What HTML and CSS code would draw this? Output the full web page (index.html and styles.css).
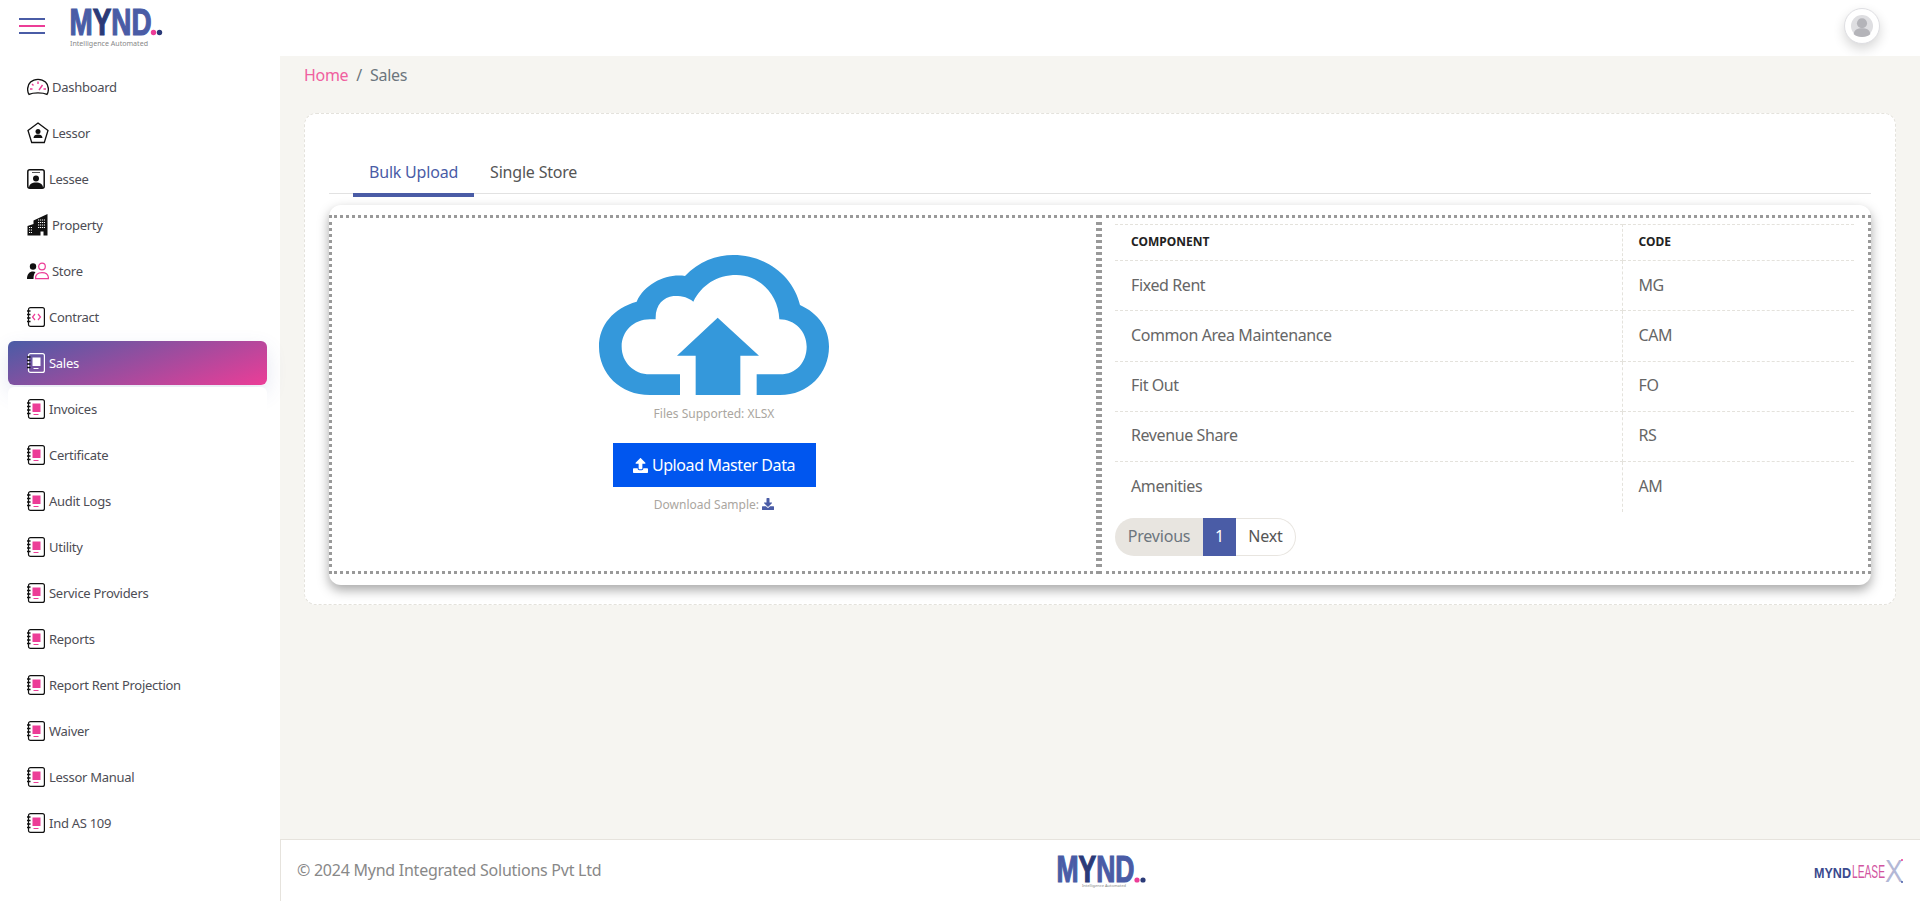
FILE: index.html
```html
<!DOCTYPE html>
<html>
<head>
    <title>Sales</title>
    <meta name="viewport" content="width=device-width, initial-scale=1.0">
    <link rel="stylesheet" href="styles.css">
</head>
<body>
    <svg class="defs" width="0" height="0">
        <symbol id="book" viewBox="0 0 18 20">
            <rect x="1.500" y="0.600" width="15.900" height="18.800" rx="2" fill="none" stroke="var(--line)" stroke-width="1.200"/>
            <path d="M0 4h3.500M0 7.500h3.500M0 11h3.500M0 14.500h3.500" stroke="#111" stroke-width="1.500"/>
            <rect x="5.500" y="4.500" width="8" height="8.500" fill="var(--accent)"/>
            <rect x="6.500" y="15" width="5" height="1" fill="var(--accent)"/>
        </symbol>
        <symbol id="book-code" viewBox="0 0 18 20">
            <rect x="1.500" y="0.600" width="15.900" height="18.800" rx="2" fill="none" stroke="#111" stroke-width="1.200"/>
            <path d="M0 4h3.500M0 7.500h3.500M0 11h3.500M0 14.500h3.500" stroke="#111" stroke-width="1.500"/>
            <path d="M8 7l-2.500 3 2.500 3M11 7l2.500 3-2.500 3" fill="none" stroke="#ec3d97" stroke-width="1.200"/>
        </symbol>
        <symbol id="upload" viewBox="0 0 512 512">
            <path d="M296 384h-80c-13.300 0-24-10.700-24-24V192h-87.700c-17.800 0-26.700-21.500-14.100-34.100L242.300 5.700c7.500-7.500 19.800-7.500 27.300 0l152.200 152.200c12.600 12.600 3.700 34.100-14.100 34.100H320v168c0 13.300-10.700 24-24 24zm216-8v112c0 13.300-10.700 24-24 24H24c-13.300 0-24-10.700-24-24V376c0-13.300 10.700-24 24-24h136v8c0 30.900 25.100 56 56 56h80c30.900 0 56-25.100 56-56v-8h136c13.300 0 24 10.700 24 24z"/>
        </symbol>
    </svg>

    <header class="topbar">
        <div class="burger"><span></span><span class="pink"></span><span></span></div>
        <svg class="top-logo" viewBox="0 -9 94 56">
            <text class="logo-word" x="0.500" y="26" textLength="82" lengthAdjust="spacingAndGlyphs"><tspan>M</tspan><tspan fill="#2b3a78" stroke="#2b3a78">Y</tspan><tspan>ND</tspan></text>
            <circle cx="84.500" cy="23.500" r="2.700" fill="#ec3d97"/>
            <circle cx="90.500" cy="23.500" r="2.700" fill="#2b3a78"/>
            <text class="logo-tag" x="1" y="36.500" textLength="78" lengthAdjust="spacingAndGlyphs">Intelligence Automated</text>
        </svg>
        <div class="avatar">
            <svg viewBox="0 0 20 20"><circle cx="10" cy="10" r="10" fill="#dedee1"/><circle cx="10" cy="7.500" r="4.600" fill="#b4b4b9"/><path d="M2.500 17.500c0-4 3.500-5.500 7.500-5.500s7.500 1.500 7.500 5.500c-2 1.600-4.500 2.500-7.500 2.500s-5.500-.9-7.500-2.500z" fill="#b4b4b9"/></svg>
        </div>
    </header>

    <div class="layout">
        <nav class="sidebar">
            <a class="item wide">
                <svg class="ico" viewBox="0 0 22 17"><path d="M2 15.800C.8 14 .6 12.200 .6 10.500.6 5 5 .8 11 .8s10.400 4.200 10.400 9.700c0 1.700-.2 3.500-1.400 5.300-2.500-1.200-5.500-1.500-9-1.500s-6.500.3-9 1.500z" fill="none" stroke="#111" stroke-width="1.300"/><path d="M3 10.500h2.500M16.500 10.500h2.500M5 5.500l1.500 1.500M11 3v2.500M15.500 6.500l-3.500 5" stroke="#ec3d97" stroke-width="1.400" fill="none"/></svg>
                Dashboard
            </a>
            <a class="item wide">
                <svg class="ico" viewBox="0 0 22 22"><path d="M11 1l10 7.500-3.700 12H4.700L1 8.500z" fill="none" stroke="#111" stroke-width="1.300"/><circle cx="11" cy="9.500" r="2.500" fill="#111"/><path d="M6.500 16c0-2.500 2-3.500 4.500-3.500s4.500 1 4.500 3.500z" fill="#111"/></svg>
                Lessor
            </a>
            <a class="item">
                <svg class="ico-s" viewBox="0 0 18 20"><rect x="0.800" y="0.800" width="16.400" height="18.400" rx="2" fill="none" stroke="#111" stroke-width="1.500"/><path d="M5 3.500h8" stroke="#555"/><circle cx="9" cy="9.500" r="3" fill="#111"/><path d="M2 19c0-4 3-5.500 7-5.500s7 1.500 7 5.500z" fill="#111"/></svg>
                Lessee
            </a>
            <a class="item wide">
                <svg class="ico" viewBox="0 0 22 22"><path d="M.5 21.500V12l6-2V6.500L20.500 0V21.500h-4v-4h-3v4z" fill="#111"/><path d="M2 13.500h3M2 16h3M2 18.500h3M11 6h7M11 8.500h7M11 11h7M11 13.500h7" stroke="#fff" stroke-width="1" stroke-dasharray="1.200 .8"/></svg>
                Property
            </a>
            <a class="item wide">
                <svg class="ico" viewBox="0 0 22 17"><circle cx="6" cy="4" r="3.200" fill="#111"/><path d="M0 16.500c0-5 2.500-7.500 6-7.500 1 0 1.800.2 2.500.6-1.200 1.500-2 3.500-2 6.900z" fill="#111"/><circle cx="15" cy="4" r="3.300" fill="none" stroke="#ec3d97" stroke-width="1.200"/><path d="M8.500 16.200c0-4 2.500-6 6.500-6s6.500 2 6.500 6z" fill="none" stroke="#ec3d97" stroke-width="1.200"/></svg>
                Store
            </a>
            <a class="item"><svg class="ico-s"><use href="#book-code"/></svg>Contract</a>
            <a class="item active"><svg class="ico-s"><use href="#book"/></svg>Sales</a>
            <a class="item"><svg class="ico-s"><use href="#book"/></svg>Invoices</a>
            <a class="item"><svg class="ico-s"><use href="#book"/></svg>Certificate</a>
            <a class="item"><svg class="ico-s"><use href="#book"/></svg>Audit Logs</a>
            <a class="item"><svg class="ico-s"><use href="#book"/></svg>Utility</a>
            <a class="item"><svg class="ico-s"><use href="#book"/></svg>Service Providers</a>
            <a class="item"><svg class="ico-s"><use href="#book"/></svg>Reports</a>
            <a class="item"><svg class="ico-s"><use href="#book"/></svg>Report Rent Projection</a>
            <a class="item"><svg class="ico-s"><use href="#book"/></svg>Waiver</a>
            <a class="item"><svg class="ico-s"><use href="#book"/></svg>Lessor Manual</a>
            <a class="item"><svg class="ico-s"><use href="#book"/></svg>Ind AS 109</a>
        </nav>

        <main class="main">
            <div class="content">
                <div class="crumb"><a>Home</a><span class="sep">/</span><span>Sales</span></div>

                <section class="card">
                    <div class="tabs">
                        <a class="tab on">Bulk Upload</a>
                        <a class="tab">Single Store</a>
                    </div>

                    <div class="panel">
                        <div class="drop">
                            <svg class="cloud" viewBox="87 45 690 420">
                                <path fill="#3498db" d="M240 465C150 465 87 400 87 320C87 255 130 205 200 185C225 130 290 100 345 108C385 65 440 45 490 45C590 45 670 110 690 195C745 220 777 265 777 320C777 400 715 465 630 465H560V403H630C680 403 710 365 710 320C710 275 675 238 628 238C625 160 565 105 500 105C440 105 395 135 370 185C355 172 335 167 310 168C280 172 255 195 257 238H240C190 238 155 275 155 320C155 365 190 403 240 403H330V465Z"/>
                                <path fill="#3498db" d="M443 233L567 347H511V465H377V347H321Z"/>
                            </svg>
                            <p class="hint">Files Supported: XLSX</p>
                            <button class="upload-btn"><svg class="btn-ico"><use href="#upload"/></svg>Upload Master Data</button>
                            <p class="sample">Download Sample:
                                <svg class="dl-ico" viewBox="0 0 512 512"><path d="M216 0h80c13.300 0 24 10.700 24 24v168h87.700c17.800 0 26.700 21.500 14.100 34.100L269.700 378.300c-7.500 7.500-19.800 7.500-27.300 0L90.100 226.100c-12.600-12.600-3.700-34.100 14.100-34.100H192V24c0-13.300 10.700-24 24-24zm296 376v112c0 13.300-10.700 24-24 24H24c-13.300 0-24-10.700-24-24V376c0-13.300 10.700-24 24-24h146.700l49 49c20.100 20.100 52.500 20.100 72.600 0l49-49H488c13.300 0 24 10.700 24 24z"/></svg>
                            </p>
                        </div>

                        <div class="codes">
                            <table>
                                <thead>
                                    <tr><th>COMPONENT</th><th>CODE</th></tr>
                                </thead>
                                <tbody>
                                    <tr><td>Fixed Rent</td><td>MG</td></tr>
                                    <tr><td>Common Area Maintenance</td><td>CAM</td></tr>
                                    <tr><td>Fit Out</td><td>FO</td></tr>
                                    <tr><td>Revenue Share</td><td>RS</td></tr>
                                    <tr><td>Amenities</td><td>AM</td></tr>
                                </tbody>
                            </table>
                            <div class="pager">
                                <a class="prev">Previous</a>
                                <a class="num">1</a>
                                <a class="next">Next</a>
                            </div>
                        </div>
                    </div>
                </section>
            </div>

            <footer class="footer">
                <span class="copy">© 2024 Mynd Integrated Solutions Pvt Ltd</span>
                <svg class="foot-logo" viewBox="0 -9 90 50">
                    <text class="logo-word" x="0.500" y="25" textLength="78" lengthAdjust="spacingAndGlyphs"><tspan>M</tspan><tspan fill="#2b3a78" stroke="#2b3a78">Y</tspan><tspan>ND</tspan></text>
                    <circle cx="81" cy="23" r="2.600" fill="#ec3d97"/>
                    <circle cx="87" cy="23" r="2.600" fill="#2b3a78"/>
                    <text class="foot-tag" x="26" y="30" textLength="44" lengthAdjust="spacingAndGlyphs">Intelligence Automated</text>
                </svg>
                <svg class="lease-logo" viewBox="0 -6 90 40">
                    <text class="lease-mynd" x="0" y="21" textLength="37" lengthAdjust="spacingAndGlyphs">MYND</text>
                    <text class="lease-word" x="38" y="21" textLength="33" lengthAdjust="spacingAndGlyphs">LEASE</text>
                    <text class="lease-x" x="71" y="25" textLength="18" lengthAdjust="spacingAndGlyphs">X</text>
                    <circle cx="88" cy="3" r="1" fill="#ec3d97"/>
                    <circle cx="88" cy="25" r="1" fill="#4a5ca6"/>
                </svg>
            </footer>
        </main>
    </div>
</body>
</html>
```

FILE: styles.css
```css
* {
    margin: 0;
    padding: 0;
    box-sizing: border-box;
}

body {
    font-family: "Noto Sans", "Open Sans", sans-serif;
    font-size: 16px;
    color: #555;
    background: #fff;
    height: 901px;
    overflow: hidden;
}

.defs {
    position: absolute;
}

/* top bar */
.topbar {
    height: 56px;
    background: #fff;
    display: flex;
    align-items: flex-start;
    padding-left: 19px;
}

.burger {
    width: 26px;
    margin-top: 18px;
    display: flex;
    flex-direction: column;
    gap: 5px;
}

.burger span {
    height: 2px;
    background: #4a5ca6;
}

.burger .pink {
    background: #ec3d97;
}

.top-logo {
    width: 94px;
    height: 56px;
    margin-left: 24px;
}

.logo-word {
    font-family: "Liberation Sans", sans-serif;
    font-weight: 700;
    font-size: 36px;
    fill: #4a5ca6;
    stroke: #4a5ca6;
    stroke-width: 1.200px;
}

.logo-tag {
    font-family: "Noto Sans", sans-serif;
    font-size: 7.500px;
    fill: #888;
}

.foot-tag {
    font-family: "Noto Sans", sans-serif;
    font-size: 4px;
    fill: #888;
}

.avatar {
    width: 36px;
    height: 36px;
    margin: 8px 40px 0 auto;
    border-radius: 50%;
    background: #fff;
    border: 1px solid #dfdfe3;
    box-shadow: 0 5px 12px rgba(0, 0, 0, 0.16);
    display: flex;
    align-items: center;
    justify-content: center;
}

.avatar svg {
    display: block;
    width: 22px;
    height: 22px;
}

.layout {
    display: flex;
    height: 845px;
}

/* side menu */
.sidebar {
    width: 280px;
    flex-shrink: 0;
    background: #fff;
    padding: 9px 13px 0 8px;
    display: flex;
    flex-direction: column;
    gap: 2px;
}

.item {
    --line: #111;
    --accent: #ec3d97;
    position: relative;
    height: 44px;
    padding-left: 19px;
    display: flex;
    align-items: center;
    gap: 4px;
    font-size: 13px;
    letter-spacing: -0.28px;
    color: #4d4d55;
    background: #fff;
    border-radius: 6px;
}

.item.active {
    --line: #fff;
    --accent: #fff;
    color: #fff;
    background: linear-gradient(160deg, #4a5ca6 0%, #ec3d97 100%);
    box-shadow: 0 8px 20px rgba(74, 92, 166, 0.15);
}

.ico {
    width: 22px;
    height: 22px;
    flex-shrink: 0;
}

.ico-s {
    width: 18px;
    height: 20px;
    flex-shrink: 0;
}

.wide {
    gap: 3px;
}

/* main area */
.main {
    flex: 1;
    display: flex;
    flex-direction: column;
    background: #f6f5f1;
}

.content {
    flex: 1;
    padding: 0 24px;
}

.crumb {
    height: 57px;
    padding-top: 8px;
    font-size: 16px;
    line-height: 22px;
    letter-spacing: -0.3px;
    color: #6c757d;
}

.crumb a {
    color: #f0609f;
}

.sep {
    margin: 0 8px;
}

.card {
    height: 492px;
    background: #fff;
    border: 1px dashed #e4e2dc;
    border-radius: 12px;
    padding: 24px;
}

.tabs {
    height: 56px;
    padding: 16px 0 0 24px;
    display: flex;
    border-bottom: 1px solid #e2e2e2;
}

.tab {
    height: 43px;
    padding: 0 16px;
    line-height: 37px;
    letter-spacing: -0.2px;
    color: #555;
}

.tab.on {
    color: #4a5ca6;
    border-bottom: 4px solid #4a5ca6;
}

.panel {
    height: 380px;
    margin-top: 11px;
    padding: 10px 0 11px;
    background: #fff;
    border-radius: 12px;
    box-shadow: 0 5px 12px rgba(0, 0, 0, 0.35);
    display: grid;
    grid-template-columns: 770px 1fr;
}

.drop,
.codes {
    border: 3px dotted #999;
}

.drop {
    display: flex;
    flex-direction: column;
    align-items: center;
    padding-top: 37px;
}

.cloud {
    width: 230px;
    height: 140px;
    display: block;
}

.hint {
    margin-top: 10px;
    font-size: 12px;
    line-height: 18px;
    color: #aaa6a0;
}

.upload-btn {
    width: 203px;
    height: 44px;
    margin-top: 20px;
    border: none;
    background: #0056ef;
    color: #fff;
    font-family: inherit;
    font-size: 16px;
    letter-spacing: -0.4px;
    display: flex;
    align-items: center;
    justify-content: center;
    gap: 4px;
}

.btn-ico {
    width: 15px;
    height: 15px;
    fill: #fff;
}

.sample {
    margin-top: 9px;
    font-size: 12px;
    line-height: 18px;
    color: #aaa6a0;
}

.dl-ico {
    width: 12px;
    height: 12px;
    fill: #4a5ca6;
    vertical-align: -1px;
}

/* component table */
.codes {
    padding: 6px 14px 0 13px;
}

table {
    width: 100%;
    border-collapse: collapse;
}

th {
    height: 36px;
    padding: 0 0 2px 16px;
    font-size: 12px;
    font-weight: 700;
    text-align: left;
    color: #222;
    border-top: 1px dashed #e4e2dc;
    border-bottom: 1px dashed #e4e2dc;
}

td {
    height: 50.250px;
    padding: 0 0 2px 16px;
    letter-spacing: -0.4px;
    color: #666;
    border-bottom: 1px dashed #e4e2dc;
}

tbody tr:last-child td {
    border-bottom: none;
}

th:first-child,
td:first-child {
    width: 507px;
    border-right: 1px dashed #e4e2dc;
}

.pager {
    margin-top: 6px;
    display: flex;
    width: 181px;
    height: 38px;
    line-height: 37px;
    letter-spacing: -0.2px;
    text-align: center;
}

.prev {
    width: 88px;
    color: #6c757d;
    background: #e8e5e0;
    border-radius: 19px 0 0 19px;
}

.num {
    width: 33px;
    color: #fff;
    background: #4a5ca6;
}

.next {
    width: 60px;
    color: #555;
    line-height: 35px;
    border: 1px solid #e8e5e0;
    border-left: none;
    border-radius: 0 19px 19px 0;
}

/* footer */
.footer {
    height: 62px;
    background: #fff;
    border-top: 1px solid #e6e3dd;
    border-left: 1px solid #e6e3dd;
    padding: 0 16px;
    display: grid;
    grid-template-columns: 1fr auto 1fr;
    align-items: center;
}

.copy {
    color: #888;
    letter-spacing: -0.25px;
    margin-top: -2px;
}

.foot-logo {
    width: 90px;
    height: 50px;
    margin-top: 5px;
}

.lease-logo {
    width: 90px;
    height: 40px;
    justify-self: end;
}

.lease-mynd {
    font-family: "Liberation Sans", sans-serif;
    font-weight: 700;
    font-size: 15px;
    fill: #3b4a8e;
}

.lease-word {
    font-family: "Liberation Sans", sans-serif;
    font-size: 18px;
    fill: #d2559f;
}

.lease-x {
    font-family: "Liberation Sans", sans-serif;
    font-size: 32px;
    fill: #b3b8d6;
}
```
